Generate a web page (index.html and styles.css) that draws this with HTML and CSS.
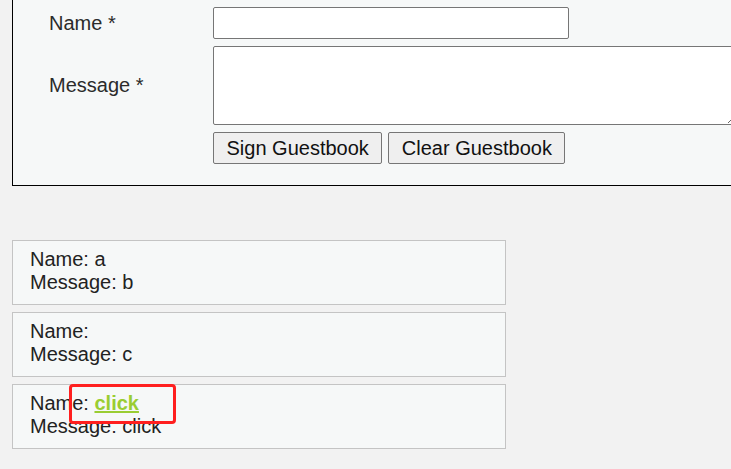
FILE: index.html
```html
<!DOCTYPE html>
<html lang="en">
<head>
<meta charset="utf-8">
<title>Guestbook</title>
<link rel="stylesheet" href="styles.css">
</head>
<body>
<form class="sign-form">
  <label class="field-label" for="name">Name *</label>
  <input class="field-input" id="name" type="text">
  <label class="field-label" for="message">Message *</label>
  <textarea class="field-area" id="message"></textarea>
  <div class="actions">
    <button type="button" class="btn">Sign Guestbook</button>
    <button type="button" class="btn">Clear Guestbook</button>
  </div>
</form>

<div class="entries">
  <div class="entry">
    <div>Name: a</div>
    <div>Message: b</div>
  </div>
  <div class="entry">
    <div>Name: </div>
    <div>Message: c</div>
  </div>
  <div class="entry">
    <div>Name: <a class="entry-link" href="#">click</a></div>
    <div>Message: click</div>
    <span class="highlight"></span>
  </div>
</div>
</body>
</html>
```
FILE: styles.css
```css
html, body {
  overflow: hidden;
}
body {
  margin: 0;
  background: #f2f2f2;
  font-family: "Liberation Sans", Arial, sans-serif;
  font-size: 20px;
  line-height: 23px;
  color: #222;
  width: 731px;
  height: 469px;
}
.sign-form {
  display: grid;
  grid-template-columns: 164px 530px;
  row-gap: 7px;
  align-items: center;
  width: 760px;
  margin: -14px 0 0 12px;
  padding: 20px 0 21px 36px;
  border: 1px solid #000;
  background: #f6f8f8;
  box-sizing: content-box;
}
.field-label {
  color: #2b2b2b;
}
.field-input {
  box-sizing: border-box;
  width: 356px;
  height: 32px;
  border: 1px solid #767676;
  border-radius: 2px;
  background: #fff;
  font: inherit;
  margin: 0;
}
.field-area {
  box-sizing: border-box;
  width: 524px;
  height: 79px;
  border: 1px solid #767676;
  border-radius: 2px;
  background: #fff;
  font: inherit;
  margin: 0;
  resize: both;
}
.actions {
  grid-column: 2;
  display: flex;
  gap: 6px;
}
.btn {
  box-sizing: border-box;
  height: 32px;
  padding: 0 12.5px;
  border: 1px solid #767676;
  border-radius: 2px;
  background: #efefef;
  color: #111;
  font-family: "Liberation Sans", Arial, sans-serif;
  font-size: 20px;
  line-height: 23px;
}
.entries {
  margin: 54px 0 0 12px;
  width: 494px;
  display: flex;
  flex-direction: column;
  gap: 7.5px;
}
.entry {
  position: relative;
  border: 1px solid #c4c4c4;
  background: #f6f8f8;
  padding: 7.25px 17px 9.25px;
}
.entry-link {
  color: #9acd32;
  font-weight: bold;
  text-decoration: underline;
}
.highlight {
  position: absolute;
  left: 56px;
  top: -1.5px;
  width: 101px;
  height: 34px;
  border: 3.5px solid #ff1f1f;
  border-radius: 4px;
}
```
